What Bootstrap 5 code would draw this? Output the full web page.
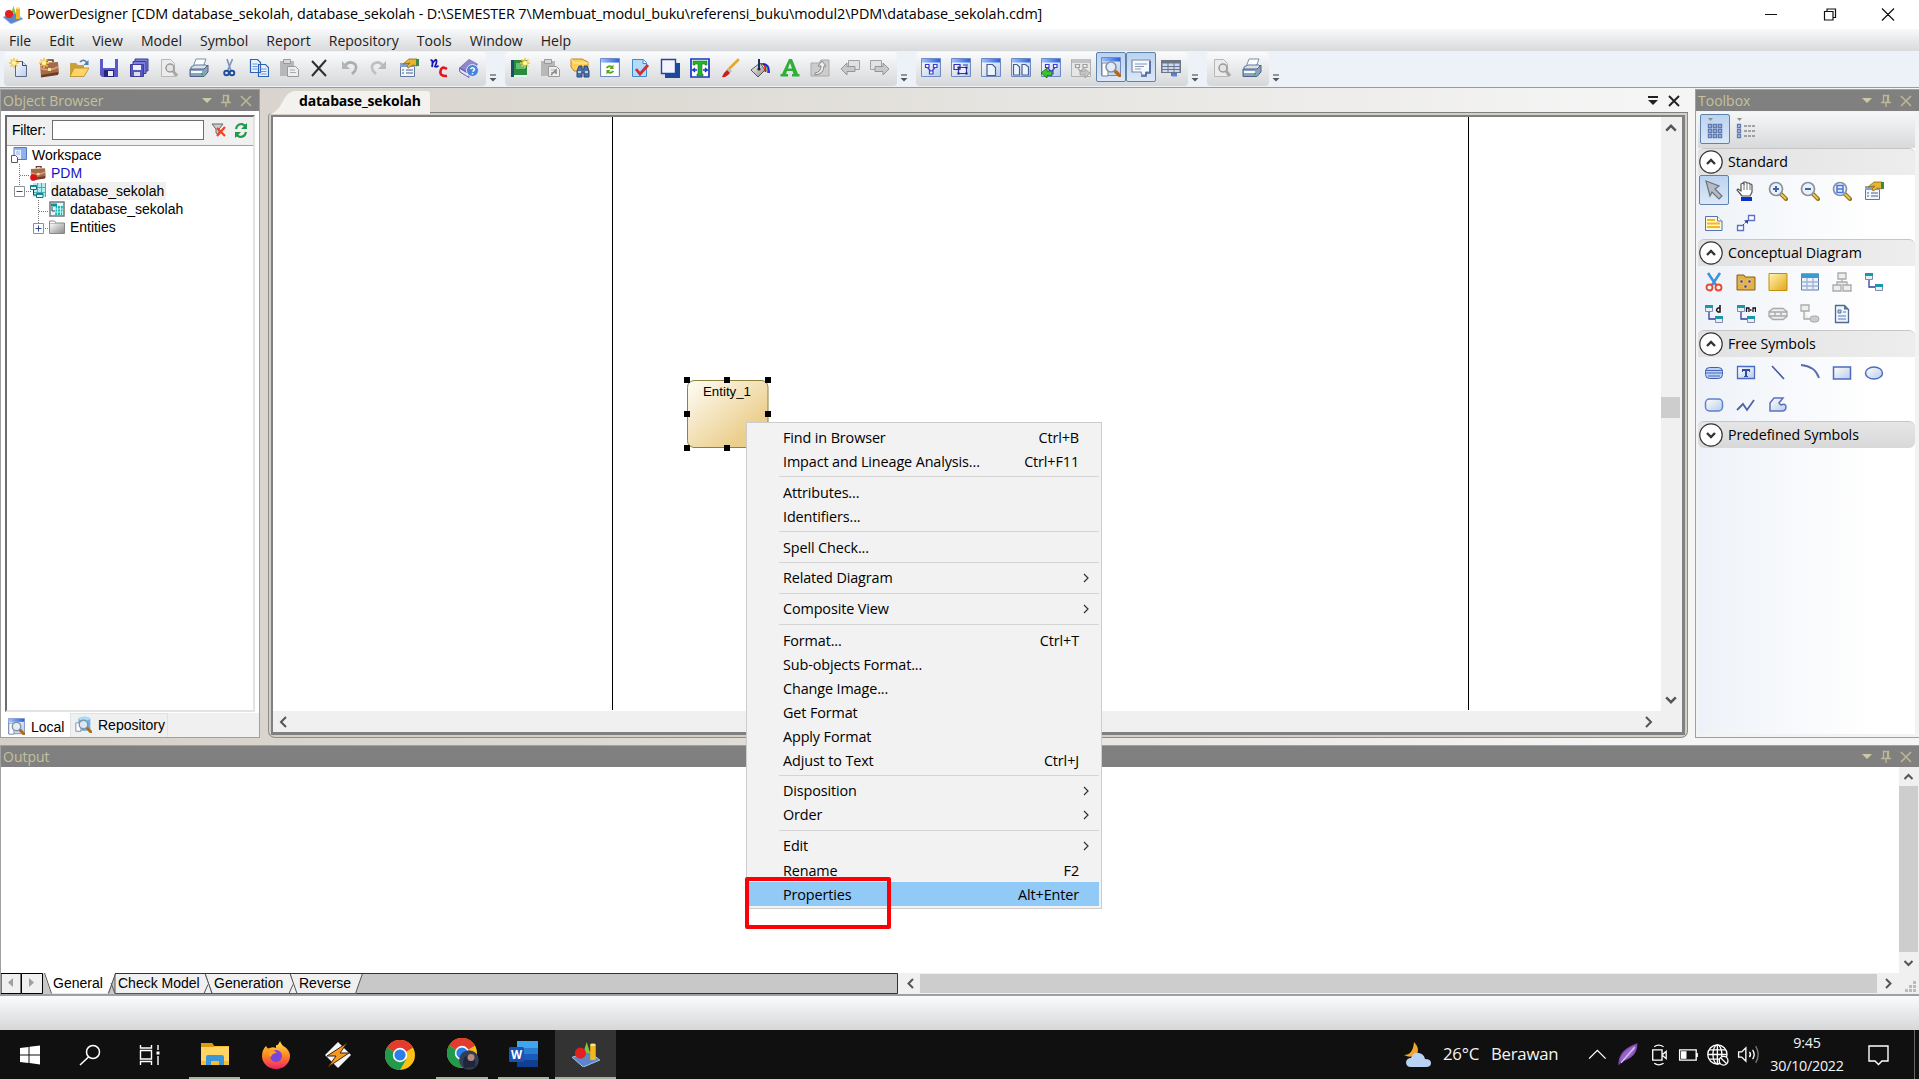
<!DOCTYPE html>
<html lang="en">
<head>
<meta charset="utf-8">
<title>PowerDesigner</title>
<link href="https://cdn.jsdelivr.net/npm/bootstrap@5.3.0/dist/css/bootstrap.min.css" rel="stylesheet">
<style>
body{height:1079px;width:1919px;overflow:hidden;background:#fff;color:#000;font:14px/1 "Open Sans","Noto Sans",sans-serif}
svg{display:block;flex:none}
.arial{font-family:"Liberation Sans",Arial,sans-serif;font-size:14px}
.titlebar{height:29px;padding:0 23px 0 3px;font-size:14.4px}
.titlebar .caption{letter-spacing:-.1px;margin-left:4px}
.menubar{height:22px;background:linear-gradient(#f8f9fa,#d9dadb);padding-left:9px;gap:18px;color:#222;font-size:14.05px}
.menubar span{position:static;line-height:24px;white-space:nowrap}
.toolstrip{height:37px;background:#edf2f9;border-bottom:1px solid #999ba0;padding:1px 0 0 4px}
.tgroup{height:34px;border-radius:4px;background:linear-gradient(#fafbfc,#d6d7d8);padding-right:2px}
.tcell{width:30px;height:32px}
.sel{background:linear-gradient(#bcd3ee,#dbe8f8);border:1px solid #5d82ab;border-radius:2px}
.tcell.sel{height:30px;margin-top:0}
.more{width:19px;height:34px;padding:22px 0 0 3px}
.workarea{height:657px;padding-top:1px;background:linear-gradient(90deg,#d6d0c8,#dedbd5 35%,#f5f5f5 85%)}
.dock{border:1px solid #a0a0a0;border-top:0}
.docktitle{height:22px;background:#808080;border-top:1px solid #a0a0a0;color:#c5c19c;font-size:14px;padding:0 7px 0 2px}
.docktitle span{padding-top:1px}
.docktitle svg{margin-left:7px}
.browser{width:260px;height:649px;background:#fff}
.sunken{margin:4px 4px 0 4px;height:597px;border:2px solid #e3e3e3;border-top-color:#6d6d6d;border-left-color:#6d6d6d}
.filterbar{height:29px;background:#f0f0f0;border-bottom:1px solid #a0a0a0;padding:0 0 2px 5px}
.filterbar span{letter-spacing:-.2px}
.fbox{width:152px;height:20px;border:1px solid #6e6e6e;background:#fff;margin:0 5px 0 6px}
.tree{height:90px;position:relative}
.trow{height:18px;line-height:18px;letter-spacing:-.03px}
.trow svg{margin-right:5px}
.btabs{height:24px;background:#f0f0f0;margin-top:1px}
.btab{height:24px}
.docarea{width:1420px;height:649px;margin-left:8px}
.doctabs{height:24px}
.doctab{width:162px;height:23px}
.doctab span{left:31px;top:5px;font-weight:700;font-size:14px;letter-spacing:-.18px}
.tabfill{border-bottom:1px solid #808080;padding-right:6px}
.frame1{height:625px;border:1px solid #8c8c88;border-top:0;border-radius:4px 0 7px 7px;background:#d5d0c7;padding:2px}
.frame2{height:620px;border:solid #808080;border-width:2px 3px 3px 2px;background:#fff}
.canvas{width:1388px;height:594px;background:#fff}
.page{left:339px;top:0;width:857px;height:593px;border:solid #000;border-width:0 1px}
.entity{left:414px;top:263px;width:82px;height:68px}
.vbar{width:21px;background:#f0f0f0;height:594px}
.thumb{background:#cdcdcd}
.hbar{height:21px;background:#f0f0f0;padding:0 28px 0 5px}
.toolbox{width:224px;height:649px;margin-left:7px;background:#f3f3f3;border-right:0}
.tboxin{margin:1px 4px 0 2px;height:622px;background:linear-gradient(90deg,#eef2f8,#fff 80%)}
.tbtools{height:36px;background:linear-gradient(#f6f7f9,#d8d9db);padding:2px 0 0 2px}
.tbtools .tcell{height:30px;width:30px;margin-right:1px}
.sechead{height:27px;border-top:1px solid #c6c6c6;border-radius:6px 6px 0 0;background:linear-gradient(90deg,#e2e2e2,#ededed);font-size:14.2px;padding-left:1px;letter-spacing:-.06px}
.sechead svg{margin-right:5px}
.secbody{height:64px;padding-left:1px}
.secbody>div{width:32px;height:32px;padding-right:2px}
.secbody .sel{width:30px;height:30px;margin-right:2px;padding:0}
.output{height:251px;background:#fff;border-left:1px solid #a0a0a0}
.outbody{height:206px}
.obar{width:20px;background:#f0f0f0;padding-right:1px}
.outfoot{height:21px}
.status{height:34px;background:linear-gradient(#fafbfd,#d5d7d9)}
.taskbar{height:49px;background:#101010;color:#f4f4f4;position:relative;z-index:0}
.tk{width:62px;height:49px}
.tk.run{border-bottom:2px solid #a3b5a2;padding-top:1px}
.clock{width:86px;margin-left:-1px;font-size:14.3px;line-height:22.5px;letter-spacing:-.25px}
.ctx{left:746px;top:422px;width:356px;height:487px;background:#f2f2f2;border:1px solid #ccc;padding:2px;font-size:14.4px}
.ctx .mi{height:24px;line-height:26px;padding:0 10px 0 34px;letter-spacing:-.12px}
.ctx .mi.sc{padding-right:20px}
.ctx .hot{background:#91c9f7}
.ctx .msep{height:7px;padding:3px 0;margin-left:30px}
.ctx .msep:before{content:"";display:block;height:1px;background:#d4d4d4}
.callout{left:745px;top:877px;width:146px;height:52px;border:4px solid #fb0007;border-radius:2px}
</style>
<script src="https://cdn.jsdelivr.net/npm/bootstrap@5.3.0/dist/js/bootstrap.bundle.min.js"></script>
</head>
<body class="d-flex flex-column">
<svg width="0" height="0" class="position-absolute">
<defs>
<linearGradient id="gb" x1="0" y1="0" x2="1" y2="1"><stop offset="0" stop-color="#fff"/><stop offset="1" stop-color="#b9cbe8"/></linearGradient>
<linearGradient id="gy" x1="0" y1="0" x2="1" y2="1"><stop offset="0" stop-color="#fff3b0"/><stop offset="1" stop-color="#e2a718"/></linearGradient>
<linearGradient id="gw" x1="0" y1="0" x2="1" y2="0"><stop offset="0" stop-color="#9fc0ff"/><stop offset="1" stop-color="#2a63dd"/></linearGradient>
<linearGradient id="ge" x1="0" y1="0" x2="1" y2="1"><stop offset="0" stop-color="#fffdf8"/><stop offset=".75" stop-color="#ebcf8e"/><stop offset="1" stop-color="#e9ca84"/></linearGradient>
<linearGradient id="gg" x1="0" y1="0" x2="1" y2="1"><stop offset="0" stop-color="#fff"/><stop offset="1" stop-color="#888"/></linearGradient>
<linearGradient id="gf" x1="0" y1="0" x2="0" y2="1"><stop offset="0" stop-color="#ffe14a"/><stop offset=".5" stop-color="#ff8a1f"/><stop offset="1" stop-color="#f0206a"/></linearGradient>
<g id="star"><path d="M5 0v10M0 5h10M1.500 1.500l7 7M8.500 1.500l-7 7" stroke="#f2c443" stroke-width="1.500"/><circle cx="5" cy="5" r="2" fill="#fff6b0"/></g>
<g id="winf"><path d="M.5 .5h19v18h-19z" fill="url(#gb)" stroke="#6d8ac4"/><path d="M1 1h18v3.500H1z" fill="url(#gw)"/></g>
<g id="glass"><path d="M12 12l5 5" stroke="#b06a1c" stroke-width="3.500" stroke-linecap="round"/><circle cx="8" cy="8" r="5" fill="#e4eefa" fill-opacity=".9" stroke="#8492a6" stroke-width="1.600"/></g>
<g id="zglass"><path d="M13 13l5 5" stroke="#8c701c" stroke-width="4" stroke-linecap="round"/><path d="M13 13l4.500 4.500" stroke="#e8c650" stroke-width="2" stroke-linecap="round"/><circle cx="8" cy="8" r="6.500" fill="#e9f1fc" stroke="#8c929a" stroke-width="1.700"/></g>
<g id="cdm"><path d="M5 7v8h7" fill="none" stroke="#3a3aa8" stroke-width="1.300"/><path d="M1.500 1.500h7v6h-7zM11.500 12.500h7v6h-7z" fill="#dff2f5" stroke="#88a"/><path d="M1 1h8v3H1zM11 12h8v3h-8z" fill="#1d97a8"/></g>
<g id="bag"><path d="M8 4V2h6v2" fill="none" stroke="#6f3b22" stroke-width="1.500"/><path d="M1 5l18-1 1 12-18 3z" fill="#a56a48"/><path d="M1 10q9 4 18-1" fill="none" stroke="#d9a27c" stroke-width="1.500"/><path d="M2 17l17-3v3l-17 2.500z" fill="#6d3c25"/><path d="M9 10h3v3H9z" fill="#f3e2a0"/></g>
<symbol id="new" viewBox="0 0 20 20"><path d="M6.500 3.500h7l4 4v11h-11z" fill="url(#gb)" stroke="#5b6a8a"/><path d="M13.500 3.500v4h4" fill="#dfe8f5" stroke="#39456a"/><use href="#star"/></symbol>
<symbol id="newcase" viewBox="0 0 20 20"><use href="#bag"/><use href="#star"/></symbol>
<symbol id="open" viewBox="0 0 20 20"><path d="M1 5h6l2 2h6v11H1z" fill="#caa03c"/><path d="M5 10h15l-5 8.500H1z" fill="#ffd365" stroke="#b58a2a" stroke-width=".8"/><path d="M11 4q4-4 7 1" fill="none" stroke="#507fae" stroke-width="1.600"/><path d="M19.500 2v5h-5z" fill="#507fae"/></symbol>
<symbol id="save" viewBox="0 0 20 20"><path d="M1 1h18v18H3l-2-2z" fill="#5858c8"/><path d="M4 1h12v9H4z" fill="#f2f6ff"/><path d="M5 12h10v7H5z" fill="#25257c"/><path d="M9 13h5v5H9z" fill="#eee"/></symbol>
<symbol id="saveall" viewBox="0 0 20 20"><path d="M6 1h13v12H6z" fill="#7d7ddb" stroke="#3c3c98"/><path d="M4 3.500h13v12H4z" fill="#7d7ddb" stroke="#3c3c98"/><path d="M1.500 6.500h13v12h-13z" fill="#5555c0" stroke="#3c3c98"/><path d="M4 7h8v5H4z" fill="#eef"/><path d="M5 14h6v4H5z" fill="#ddd"/></symbol>
<symbol id="prevg" viewBox="0 0 20 20"><path d="M2.500 1.500h9l4 4v13h-13z" fill="#ececec" stroke="#b7b7b7"/><circle cx="11" cy="10" r="4" fill="#e4e4e4" stroke="#9a9a9a" stroke-width="1.500"/><path d="M14 13l4 5" stroke="#a8a8a8" stroke-width="3"/></symbol>
<symbol id="print" viewBox="0 0 20 20"><path d="M7 1h10l-3 8H4z" fill="#fff" stroke="#7b8db0"/><path d="M2 9l4-2h11l2 2-4 3H2z" fill="#dae2ec" stroke="#60769a"/><path d="M1 11h14l4-4v7l-4 4.500H1z" fill="#8aa1c0" stroke="#4c6288"/><path d="M2 13h11v2H2z" fill="#f7fbff"/><path d="M12 16h2" stroke="#3b3" stroke-width="2"/></symbol>
<symbol id="cut" viewBox="0 0 20 20"><path d="M8 1l4 12M13.500 1L8.500 13" stroke="#7d97bb" stroke-width="1.700"/><circle cx="7.500" cy="15" r="2.300" fill="none" stroke="#1e4f9c" stroke-width="1.900"/><circle cx="13" cy="15" r="2.300" fill="none" stroke="#1e4f9c" stroke-width="1.900"/></symbol>
<symbol id="copy" viewBox="0 0 20 20"><path d="M1.500 1.500h7l3 3v10h-10zM9.500 6.500h7l3 3v9h-10z" fill="#eaf2ff" stroke="#2d62b4" stroke-width="1.200"/><path d="M3.500 6h5M3.500 8.500h5M3.500 11h5M11.500 11h6M11.500 13.500h6M11.500 16h6" stroke="#6b96d6"/></symbol>
<symbol id="pasteg" viewBox="0 0 20 20"><path d="M1 3h14v15H1z" fill="#b8b8b8"/><path d="M4.500 1.500h7v4h-7z" fill="#d8d8d8" stroke="#999"/><path d="M8.500 8.500h8l3 3v7h-11z" fill="#eee" stroke="#999"/><path d="M11 12h5M11 14.500h6" stroke="#aaa"/></symbol>
<symbol id="del" viewBox="0 0 20 20"><path d="M3 3l14 15M17 2L3 18" stroke="#2e2e2e" stroke-width="2"/></symbol>
<symbol id="undo" viewBox="0 0 20 20"><path d="M6 8q3-5 8-3t2 8l-3 3" fill="none" stroke="#adadad" stroke-width="2.600"/><path d="M3 3v8h8z" fill="#b5b5b5"/></symbol>
<symbol id="redo" viewBox="0 0 20 20"><path d="M14 8q-3-5-8-3t-2 8l3 3" fill="none" stroke="#c0c0c0" stroke-width="2.600"/><path d="M17 3v8H9z" fill="#bababa"/></symbol>
<symbol id="props" viewBox="0 0 20 20"><path d="M1.500 6.500h14v12h-14z" fill="#f2f7ff" stroke="#60789c"/><path d="M1 5h15v4H1z" fill="#86a0cc"/><path d="M3 12h2M7 12h7M3 15h2M7 15h7" stroke="#7f93b6" stroke-width="1.400"/><path d="M4 6l6-5h8v7l-4-1-5 3-1-2 3-3z" fill="#e7b530" stroke="#8b6812" stroke-width=".8"/><path d="M17 1h3v7h-3z" fill="#3b8a49"/></symbol>
<symbol id="nc" viewBox="0 0 20 20"><path d="M1.500 2.500q3-1.500 1.500 6.500M3 6q4-6 4.500-3.500T6 8.500q2 1 3.500-1" fill="none" stroke="#1616b8" stroke-width="1.800"/><path d="M18 11q-5.500-3.500-6.500 2t6.500 5" fill="none" stroke="#e8131e" stroke-width="2.600"/></symbol>
<symbol id="help" viewBox="0 0 20 20"><path d="M0 10L10 1l9 5-8 11z" fill="#7a6cc0"/><path d="M0 10l10 6v3.500L1 14z" fill="#e8e6f4" stroke="#6a5cb2"/><path d="M2 9.500l8-8 8 4-8 9z" fill="#9287cc"/><circle cx="13.500" cy="12.500" r="6" fill="#4a84da" stroke="#dfeaff"/><path d="M11.500 11q2-2.500 4 0 0 1.500-2 2.500M13.500 15v1.200" fill="none" stroke="#fff" stroke-width="1.500"/></symbol>
<symbol id="book" viewBox="0 0 20 20"><path d="M1 2h16v17H1z" fill="#2c8a3d"/><path d="M1 2h3v17H1z" fill="#174f6c"/><path d="M6 5h9v6H6z" fill="#67bd70"/><path d="M4 17h13v2H4z" fill="#dfe"/><use href="#star" x="10"/></symbol>
<symbol id="linkg" viewBox="0 0 20 20"><use href="#pasteg" width="20" height="20"/><path d="M11 17l5-5v4" stroke="#888" fill="none" stroke-width="1.500"/></symbol>
<symbol id="find" viewBox="0 0 20 20"><path d="M1 1h11l6 3v9H4L1 9z" fill="#ffcf58" stroke="#c08a20"/><path d="M1 1l3 4h14" fill="none" stroke="#fff0a8"/><path d="M7 19v-6l2-5h3v3h2V8h3l2 5v6h-5v-4h-2v4z" fill="#4d6ea8" stroke="#2c467c"/><path d="M8 14h3M15 14h3" stroke="#cfe" stroke-width="1.500"/></symbol>
<symbol id="refwin" viewBox="0 0 20 20"><use href="#winf"/><path d="M1.500 5h17v13h-17z" fill="#fff"/><path d="M6.500 10q2.500-3 5.500-1M13.500 13q-2.500 3-5.500 1" fill="none" stroke="#59a51c" stroke-width="1.800"/><path d="M13.500 6.500v4.500H9.500zM6.500 16.500V12h4z" fill="#59a51c"/></symbol>
<symbol id="check" viewBox="0 0 20 20"><path d="M2.500 1.500h11l3 3v14h-14z" fill="#b4dbfa" stroke="#3c8cd0"/><path d="M13 1.500v4h4" fill="#e7f5ff" stroke="#3c8cd0"/><path d="M6 11l4 5 8-9" fill="none" stroke="#cf2f33" stroke-width="2.800"/></symbol>
<symbol id="shadow" viewBox="0 0 20 20"><path d="M5 5h15v15H5z" fill="#1c4a96"/><path d="M1.500 1.500h14v14h-14z" fill="#f1f4ff" stroke="#2b3fae" stroke-width="1.400"/></symbol>
<symbol id="tbox" viewBox="0 0 20 20"><path d="M1 1h18v18H1z" fill="#fff" stroke="#1c35c4" stroke-width="1.700"/><path d="M3 3h14v4h-2v-1h-3v10h1v2H7v-2h1V6H5v1H3z" fill="#25b52c" stroke="#117518" stroke-width=".6"/><path d="M2 12h5M13 12h5M5 10l-2 2 2 2M15 10l2 2-2 2" stroke="#1c35c4" fill="none" stroke-width="1.400"/></symbol>
<symbol id="brush" viewBox="0 0 20 20"><path d="M18 2L8 12" stroke="#e8a82a" stroke-width="2.800" stroke-linecap="round"/><path d="M9 10l3 3-2 2-3-3z" fill="#bbb"/><path d="M7 12l3 3q-4 5-8 4 2-5 5-7z" fill="#c81e1e"/></symbol>
<symbol id="bucket" viewBox="0 0 20 20"><path d="M1 12L10 5l5 7-7 7z" fill="url(#gg)" stroke="#555"/><path d="M9 1v10" stroke="#1c2b70" stroke-width="2"/><circle cx="9" cy="11" r="1.600" fill="#222"/><path d="M11 6q5-1 4.500 8" fill="none" stroke="#e11" stroke-width="1.800"/><path d="M12 6q6-1 5.500 9" fill="none" stroke="#2a2" stroke-width="1.300"/><path d="M13 6q6.500 0 6 9" fill="none" stroke="#22d" stroke-width="1.800"/></symbol>
<symbol id="fonta" viewBox="0 0 20 20"><path d="M9 1h3l6 15h1.500v2.500H12V16h1.500l-1-3H7l-1 3h2v2.500H.5V16H2zM10 5l-2 5.500h4z" fill="#2fae39" fill-rule="evenodd"/></symbol>
<symbol id="upg" viewBox="0 0 20 20"><path d="M1 5h8l2-3h8v16H1z" fill="#cdcdcd" stroke="#aaa"/><path d="M5 15q6-1 6-7H8l4-5 4 5h-2q0 8-9 9z" fill="#eee" stroke="#888"/></symbol>
<symbol id="backg" viewBox="0 0 20 20"><path d="M8.500 2.500h11v9h-11z" fill="#e2e2e2" stroke="#a2a2a2"/><path d="M1 11l6-6v3.500h8v5H7V17z" fill="#c9c9c9" stroke="#959595"/></symbol>
<symbol id="fwdg" viewBox="0 0 20 20"><path d="M.5 2.500h11v9H.5z" fill="#e2e2e2" stroke="#a2a2a2"/><path d="M19 11l-6-6v3.500H5v5h8V17z" fill="#c9c9c9" stroke="#959595"/></symbol>
<symbol id="w1" viewBox="0 0 20 20"><use href="#winf"/><path d="M4.500 6.500H8v3H4.500zM12.500 6.500H16v3h-3.500zM8.500 13H12v3H8.500zM6.500 9.500l3 3.500M14 9.500L11 13" fill="#fff" stroke="#3d3dcc" stroke-width="1.200"/></symbol>
<symbol id="w2" viewBox="0 0 20 20"><use href="#winf"/><path d="M3 6.500h6v5H3zM7.500 9.500h8v6h-8zM12 7h5" fill="#eef" stroke="#3030ba" stroke-width="1.200"/><path d="M6.500 8.500h2v2h-2zM6.500 14.500h2v2h-2zM14.500 8.500h2v2h-2zM14.500 14.500h2v2h-2z" fill="#224"/></symbol>
<symbol id="w3" viewBox="0 0 20 20"><use href="#winf"/><path d="M6 6.500h5.500l3 3v8H6z" fill="#eef4ff" stroke="#4a5f8c" stroke-width="1.200"/></symbol>
<symbol id="w4" viewBox="0 0 20 20"><use href="#winf"/><path d="M2.500 6.500H6l2.500 2.500v8h-6zM11 6.500h3.500L17.500 9v8H11z" fill="#eef4ff" stroke="#4a5f8c" stroke-width="1.200"/></symbol>
<symbol id="w5" viewBox="0 0 20 20"><use href="#w1" width="20" height="20"/><path d="M0 15l6-5v3h5v4.500H6V20z" fill="#3fc033" stroke="#0d6a10" stroke-width=".8"/></symbol>
<symbol id="w6" viewBox="0 0 20 20"><path d="M.5 1.500h19v17H.5z" fill="#e6e6e6" stroke="#b0b0b0"/><path d="M1 1h18v4H1z" fill="#c2c2c2"/><path d="M4.500 6.500h4v3h-4zM12 6.500h4v3h-4zM6.500 9.500l3 4 4-4" fill="#eee" stroke="#a0a0a0" stroke-width="1.200"/><path d="M19 15l-5-4v2H9v4h5v3z" fill="#c4c4c4" stroke="#999" stroke-width=".8"/></symbol>
<symbol id="w7" viewBox="0 0 20 20"><use href="#winf"/><path d="M1 6h6v13H1z" fill="#fff" stroke="#6f83a4"/><use href="#glass" x="2" y="2"/></symbol>
<symbol id="w8" viewBox="0 0 20 20"><path d="M1 3h18v12h-4v3h-4l-1-3H1z" fill="#f4f8ff" stroke="#7a8aa8" stroke-width="1.200"/><path d="M4 7h12M4 9.500h9M4 12h6" stroke="#8798b4"/><path d="M19 4v12h-4v3h-5" fill="none" stroke="#4a6597" stroke-width="1.600"/></symbol>
<symbol id="w9" viewBox="0 0 20 20"><path d="M0 2h20v13h-4v3h-6v-3H0z" fill="#6d7582"/><path d="M1.500 5.500h5v2.500h-5zM7.500 5.500h5v2.500h-5zM13.500 5.500h5v2.500h-5zM1.500 9h5v2h-5zM7.500 9h5v2h-5zM13.500 9h5v2h-5zM1.500 12h5v2h-5zM7.500 12h5v2h-5zM13.500 12h5v2h-5z" fill="#c9d9f6"/><path d="M11 16h5v2.500h-5z" fill="#5b86d8"/></symbol>
<symbol id="ws" viewBox="0 0 16 16"><path d="M3 .5h12.500v12H3z" fill="#e9f1fd" stroke="#5877ba"/><path d="M3 1h12v2H3zM10 3h5v9h-5z" fill="#8db2ef"/><path d="M5 5h4M5 7h4" stroke="#8db2ef"/><path d="M.5 8.500h4l2 2v5h-6z" fill="#fff" stroke="#556"/></symbol>
<symbol id="pdm" viewBox="0 0 16 16"><use href="#bag" transform="scale(.79)"/><circle cx="3.500" cy="12.500" r="3.300" fill="#e00f14"/></symbol>
<symbol id="mdl" viewBox="0 0 16 16"><path d="M3 0h13v14H3z" fill="#b2ecee"/><path d="M3 4.500h13M3 9.500h13M7.500 0v14M11.500 0v14M15.500 0v14" stroke="#49aeb6"/><path d="M3.500 7v5h3" fill="none" stroke="#334"/><path d="M.5 2.500h6v4h-6zM6.500 10.500h6.500v4h-6.500z" fill="#e4fbfb" stroke="#1a6f7c"/><path d="M.5 2.500h6v1.500h-6zM6.500 10.500h6.500v1.500h-6.500z" fill="#1a8f9c"/></symbol>
<symbol id="dgm" viewBox="0 0 16 16"><path d="M1 1h14v14H1z" fill="#e3f6f6" stroke="#777" stroke-width="1.500"/><path d="M7 5h7l-1 9H6z" fill="#17b8b5"/><path d="M6 8h8M6 11h8M8.500 5v9M11.500 5v9" stroke="#d8ffff" stroke-width=".8"/><path d="M2 2.500h6v3H2z" fill="#118f97"/><path d="M3 6v4h3" fill="none" stroke="#347"/></symbol>
<symbol id="fold" viewBox="0 0 16 14"><path d="M.5 3h15v10.500H.5z" fill="url(#gg)" stroke="#888"/><path d="M.5 3V1h5l1.500 2" fill="#fff" stroke="#888"/></symbol>
<symbol id="rep" viewBox="0 0 20 20"><path d="M4 3v13q7 3 14 0V3q-7-4-14 0z" fill="#68b3e8"/><ellipse cx="11" cy="3" rx="7" ry="2.300" fill="#a8dcf8"/><path d="M1 8h6v10H1z" fill="#fff" stroke="#6f83a4"/><use href="#glass" x="2" y="2"/></symbol>
<symbol id="grid9" viewBox="0 0 20 24"><path d="M3 1h5L5.500 4z" fill="#8f8f8f"/><g fill="#c5d5f0" stroke="#607bb3" stroke-width="1.500"><path d="M3.500 7.500h3v3h-3zM8.500 7.500h3v3h-3zM13.500 7.500h3v3h-3zM3.500 12.500h3v3h-3zM8.500 12.500h3v3h-3zM13.500 12.500h3v3h-3zM3.500 17.500h3v3h-3zM8.500 17.500h3v3h-3zM13.500 17.500h3v3h-3z"/></g></symbol>
<symbol id="list3" viewBox="0 0 20 24"><path d="M1 1h5L3.500 4z" fill="#8f8f8f"/><path d="M1.500 7.500h3v3h-3zM1.500 12.500h3v3h-3zM1.500 17.500h3v3h-3z" fill="#c5d5f0" stroke="#607bb3" stroke-width="1.300"/><path d="M8 9h12M8 14h12M8 19h12" stroke="#8a8a8a" stroke-width="1.300" stroke-dasharray="3 1"/></symbol>
<symbol id="arrow" viewBox="0 0 20 20"><path d="M2 1l13 5-4 3 7 7-3 3-7-7-2 4z" fill="#b7bcc4" stroke="#6a737f" stroke-width="1.200"/></symbol>
<symbol id="hand" viewBox="0 0 20 20"><path d="M6 15L1 9l1-1 3 2V3l2-1 1 1V1h2l1 1h2l1 1h1l1 1v7l-2 4z" fill="#fff" stroke="#555" stroke-width="1.200"/><path d="M8 3v6M11 2v7M14 3v6" stroke="#777"/><path d="M5 16h11v4H5z" fill="#0c32c4"/></symbol>
<symbol id="zin" viewBox="0 0 20 20"><use href="#zglass"/><path d="M8 5v6M5 8h6" stroke="#3f65a8" stroke-width="2"/></symbol>
<symbol id="zout" viewBox="0 0 20 20"><use href="#zglass"/><path d="M5 8h6" stroke="#3f65a8" stroke-width="2"/></symbol>
<symbol id="zfit" viewBox="0 0 20 20"><use href="#zglass"/><path d="M5 4.500h6v7H5zM5 8h6" stroke="#4674e8" fill="none" stroke-width="1.500"/></symbol>
<symbol id="note" viewBox="0 0 20 20"><path d="M1.500 3.500h12l4.500 4.500v9.500H1.500z" fill="#fff7d0" stroke="#5572b8"/><path d="M3 7h8M3 10.500h13M3 14h13" stroke="#f0b828" stroke-width="2"/><path d="M13.500 3.500V8H18" fill="#fff" stroke="#5572b8"/></symbol>
<symbol id="link" viewBox="0 0 20 20"><path d="M1.500 12.500h6v5h-6zM12.500 2.500h6v5h-6z" fill="#fff" stroke="#5a70c4" stroke-width="1.300"/><path d="M7 12l4-4" stroke="#2c3c90" stroke-dasharray="2 1"/><path d="M12 7v4L8 7.500z" fill="#2c3c90"/></symbol>
<symbol id="scis" viewBox="0 0 20 20"><path d="M4 1l8 12M16 1L8 13" stroke="#3b93dc" stroke-width="2.600"/><circle cx="5.500" cy="15.500" r="3" fill="none" stroke="#e84830" stroke-width="1.800"/><circle cx="14.500" cy="15.500" r="3" fill="none" stroke="#e84830" stroke-width="1.800"/></symbol>
<symbol id="pack" viewBox="0 0 20 20"><path d="M1 3h7l1 2h10v13H1z" fill="#e3b04a" stroke="#8a5f12"/><path d="M4 8h3v3H4zM12 8h3v3h-3zM8 13h3v3H8z" fill="#35408c" stroke="#f5d385" stroke-width=".7"/></symbol>
<symbol id="ent" viewBox="0 0 20 20"><path d="M1 1.500h18v17H1z" fill="url(#gy)" stroke="#c28f0c"/></symbol>
<symbol id="tbl" viewBox="0 0 20 20"><path d="M1.500 2h17v16h-17z" fill="#eaf1ff" stroke="#60789f"/><path d="M1 1.500h18v4.500H1z" fill="#3a9acd"/><path d="M1.500 10h17M1.500 14h17M7 6v12M13 6v12" stroke="#9fb2d4" stroke-width="1.300"/></symbol>
<symbol id="inh" viewBox="0 0 20 20"><path d="M6 1h8v6H6zM1 13h8v6H1zM11 13h8v6h-8zM10 7v3M5 13v-3h10v3" fill="#eee" stroke="#aaa" stroke-width="1.300"/></symbol>
<symbol id="rel" viewBox="0 0 20 20"><use href="#cdm"/></symbol>
<symbol id="reld" viewBox="0 0 20 20"><use href="#cdm"/><path d="M16 1v7h-2q-3-2 0-4h2" fill="none" stroke="#111" stroke-width="1.500"/></symbol>
<symbol id="relnn" viewBox="0 0 20 20"><use href="#cdm"/><path d="M10.500 8V4H13v4M17 8V4h2.500v4M14 6h1.500" fill="none" stroke="#111" stroke-width="1.300"/></symbol>
<symbol id="assoc" viewBox="0 0 20 20"><path d="M5 4.500h10l4 3v5l-4 3H5l-4-3v-5zM1 8h18M1 12h18M7 8v4M13 8v4" fill="#eee" stroke="#a9a9a9" stroke-width="1.300"/></symbol>
<symbol id="alink" viewBox="0 0 20 20"><path d="M1 1h8v6H1zM4 7v8h6" fill="#eee" stroke="#aaa" stroke-width="1.300"/><rect x="10" y="12" width="9" height="6" rx="3" fill="#ccc" stroke="#aaa"/></symbol>
<symbol id="file" viewBox="0 0 20 20"><path d="M3.500 1.500h9l4 4v13h-13z" fill="#eef5ff" stroke="#51698e" stroke-width="1.300"/><path d="M12 1.500v4h4.500" fill="#50729f"/><path d="M6 6h3v3H6zM11 8h3M6 12h8M6 15h8" stroke="#5578aa" fill="#bcd"/></symbol>
<symbol id="f1" viewBox="0 0 20 20"><rect x="1.500" y="4.500" width="17" height="11" rx="4" fill="#bfd0fa" stroke="#3f5fae"/><path d="M1 7.500h18M1 10h18M4 13h12" stroke="#4767b8" stroke-width="1.100"/></symbol>
<symbol id="f2" viewBox="0 0 20 20"><path d="M1.500 3.500h17v12h-17z" fill="url(#gb)" stroke="#4a6cc0" stroke-width="1.300"/><path d="M6 6h8v3h-1V8h-2v5h1v1H8v-1h1V8H7v1H6z" fill="#2f4ea4"/></symbol>
<symbol id="f3" viewBox="0 0 20 20"><path d="M4 3l12 13" stroke="#4459a0" stroke-width="1.600"/></symbol>
<symbol id="f4" viewBox="0 0 20 20"><path d="M1 2q14 1 18 13" fill="none" stroke="#5a6db0" stroke-width="1.800"/></symbol>
<symbol id="f5" viewBox="0 0 20 20"><path d="M1.500 4h17v12h-17z" fill="url(#gb)" stroke="#4a6cc0" stroke-width="1.500"/></symbol>
<symbol id="f6" viewBox="0 0 20 20"><ellipse cx="10" cy="10" rx="8.500" ry="6" fill="url(#gb)" stroke="#4a6cc0" stroke-width="1.500"/></symbol>
<symbol id="f7" viewBox="0 0 20 20"><rect x="1.500" y="4" width="17" height="12" rx="4" fill="url(#gb)" stroke="#5f80d0" stroke-width="1.500"/></symbol>
<symbol id="f8" viewBox="0 0 20 20"><path d="M1 15l6-6 4 6 7-10" fill="none" stroke="#5163a6" stroke-width="1.800"/></symbol>
<symbol id="f9" viewBox="0 0 20 20"><path d="M2 16V8l4-5h9l-4 5 2 2q5-2 5 2t-4 4z" fill="url(#gb)" stroke="#5773bd" stroke-width="1.500"/></symbol>
<symbol id="tri" viewBox="0 0 12 12"><path d="M1 3h10L6 8z" fill="#cdc9a5"/></symbol>
<symbol id="pin" viewBox="0 0 12 14"><path d="M3.500 1.500h5v7h-5zM7.500 2v6M1 8.500h10M6 9v4" fill="none" stroke="#bcb894" stroke-width="1.300"/></symbol>
<symbol id="xx" viewBox="0 0 12 12"><path d="M1 1l10 10M11 1L1 11" stroke="#bcb894" stroke-width="1.600"/></symbol>
<symbol id="mk" viewBox="0 0 8 8"><path d="M1 1h6" stroke="#555" stroke-width="1.200"/><path d="M.5 4h7L4 7.500z" fill="#555"/></symbol>
<symbol id="up" viewBox="0 0 10 8"><path d="M1 6l4-4 4 4" fill="none" stroke="#555" stroke-width="2"/></symbol>
<symbol id="logo" viewBox="0 0 20 18"><path d="M0 11l12-4 8 6-12 5z" fill="#5c87c9" stroke="#a8c4ec" stroke-width=".7"/><path d="M8 8l2.500-8L13 8z" fill="#7fc544"/><path d="M13 2h4v11h-4z" fill="#f0b71e"/><ellipse cx="15" cy="2" rx="2" ry="1" fill="#ffe48a"/><circle cx="6" cy="8" r="4" fill="#e2211f"/></symbol>
<symbol id="chrome" viewBox="0 0 30 30"><circle cx="15" cy="15" r="15" fill="#fbc116"/><path d="M15 15L2 7.500A15 15 0 0 1 28 7.500z" fill="#e33b2e"/><path d="M2 7.500A15 15 0 0 0 15 30l6.500-11.300L15 15z" fill="#229a4b"/><path d="M15 7.500h13L15 15z" fill="#e33b2e"/><circle cx="15" cy="15" r="7.200" fill="#fff"/><circle cx="15" cy="15" r="5.600" fill="#2b7de9"/></symbol>
<symbol id="cir-up" viewBox="0 0 24 24"><circle cx="12" cy="12" r="11.200" fill="#fff" stroke="#333" stroke-width="1.200"/><path d="M8 14l4-4 4 4" fill="none" stroke="#333" stroke-width="2.400"/></symbol>
</defs>
</svg>

<header class="titlebar d-flex align-items-center">
 <svg width="20" height="18"><use href="#logo"/></svg>
 <span class="caption text-nowrap">PowerDesigner [CDM database_sekolah, database_sekolah - D:\SEMESTER 7\Membuat_modul_buku\referensi_buku\modul2\PDM\database_sekolah.cdm]</span>
 <svg class="ms-auto" width="132" height="20" fill="none" stroke="#111" stroke-width="1.200"><path d="M1 9.500h12M60.500 6.500h8.500v8.500h-8.500zM63 6.500V4h8.500v8.500H69M118 3.500l12 12M130 3.500l-12 12"/></svg>
</header>
<nav class="menubar d-flex"><span>File</span><span>Edit</span><span>View</span><span>Model</span><span>Symbol</span><span>Report</span><span>Repository</span><span>Tools</span><span>Window</span><span>Help</span></nav>

<div class="toolstrip d-flex" id="strip">
 <div class="tgroup d-flex" data-icons="new newcase open save saveall prevg print cut copy pasteg del undo redo props nc help"></div><div class="more"><svg width="8" height="8"><use href="#mk"/></svg></div>
 <div class="tgroup d-flex" data-icons="book linkg find refwin check shadow tbox brush bucket fonta upg backg fwdg"></div><div class="more"><svg width="8" height="8"><use href="#mk"/></svg></div>
 <div class="tgroup d-flex" data-icons="w1 w2 w3 w4 w5 w6 w7* w8* w9"></div><div class="more"><svg width="8" height="8"><use href="#mk"/></svg></div>
 <div class="tgroup d-flex" data-icons="prevg print"></div><div class="more"><svg width="8" height="8"><use href="#mk"/></svg></div>
</div>

<main class="workarea d-flex">
 <section class="dock browser">
  <div class="docktitle d-flex align-items-center"><span class="me-auto">Object Browser</span><svg width="12" height="12"><use href="#tri"/></svg><svg width="12" height="14"><use href="#pin"/></svg><svg width="12" height="12" class="ms-2"><use href="#xx"/></svg></div>
  <div class="sunken">
   <div class="filterbar arial d-flex align-items-center"><span>Filter:</span><div class="fbox"></div>
    <svg width="44" height="18"><path d="M3 3h11l-4 5v6l-3-2V8z" fill="#ccc" stroke="#666"/><path d="M8 7l8 8M16 6l-8 9" stroke="#ee4326" stroke-width="2.200"/><path d="M27 8q1-5 6-5l4 2M37 11q-1 5-6 5l-4-2" fill="none" stroke="#21994c" stroke-width="2.200"/><path d="M38 2v6h-6zM26 17v-6h6z" fill="#21994c"/></svg>
   </div>
   <div class="tree arial">
    <svg class="position-absolute" width="60" height="90" style="left:0;top:0"><path d="M12.500 18v28M13 29.500h10M19 45.500h5M31.500 54v27M32 65.500h10M38 82.500h5" stroke="#777" stroke-dasharray="1 1"/><g fill="#fff" stroke="#8a9098"><path d="M7.500 40.500h10v10h-10zM26.500 77.500h10v10h-10z"/></g><path d="M9.500 45.500h6M28.500 82.500h6M31.500 79.500v6" stroke="#2b4a9c"/></svg>
    <div class="trow d-flex align-items-center" style="padding-left:4px"><svg width="16" height="16"><use href="#ws"/></svg><span>Workspace</span></div>
    <div class="trow d-flex align-items-center" style="padding-left:23px"><svg width="16" height="16"><use href="#pdm"/></svg><span style="color:#1414c8">PDM</span></div>
    <div class="trow d-flex align-items-center" style="padding-left:23px"><svg width="16" height="16"><use href="#mdl"/></svg><span style="background:#f0f0f0;padding-right:2px">database_sekolah</span></div>
    <div class="trow d-flex align-items-center" style="padding-left:42px"><svg width="16" height="16"><use href="#dgm"/></svg><span>database_sekolah</span></div>
    <div class="trow d-flex align-items-center" style="padding-left:42px"><svg width="16" height="14"><use href="#fold"/></svg><span>Entities</span></div>
   </div>
  </div>
  <div class="btabs arial d-flex">
   <div class="btab d-flex align-items-center bg-white border-end" style="width:70px;padding:3px 0 0 7px"><svg width="17" height="17" class="me-1"><use href="#w7"/></svg><span style="padding-left:2px">Local</span></div>
   <div class="btab d-flex align-items-center border-top border-end" style="width:97px;padding:0 0 2px 4px"><svg width="17" height="17"><use href="#rep"/></svg><span style="padding-left:6px">Repository</span></div>
  </div>
 </section>

 <section class="docarea">
  <div class="doctabs d-flex">
   <div class="doctab position-relative"><svg width="162" height="25"><path d="M3 25Q10 22 15 12T27 2H159Q162 2 162 5V25z" fill="#f3f2ef"/></svg><span class="position-absolute">database_sekolah</span></div>
   <div class="tabfill flex-grow-1 d-flex justify-content-end align-items-center"><svg width="36" height="14"><path d="M2 3h10" stroke="#222" stroke-width="2"/><path d="M2 6h10l-5 5z" fill="#222"/><path d="M23 2l10 10M33 2L23 12" stroke="#222" stroke-width="1.900"/></svg></div>
  </div>
  <div class="frame1"><div class="frame2">
   <div class="d-flex">
    <div class="canvas position-relative">
     <div class="page position-absolute"></div>
     <svg class="entity position-absolute overflow-visible" width="82" height="68"><path d="M7 .5h68q6 1 6 7v53q0 6-6 7H7q-6.500-1-6.500-7V7.500q0-6 6.500-7z" fill="url(#ge)" stroke="#8b843c" stroke-linejoin="round"/><text x="40" y="16" text-anchor="middle" font-family="Liberation Sans" font-size="13.300">Entity_1</text><g fill="#000"><path d="M-3-3h6v6h-6zM37-3h6v6h-6zM78-3h6v6h-6zM-3 31h6v6h-6zM78 31h6v6h-6zM-3 65h6v6h-6zM37 65h6v6h-6z"/></g></svg>
    </div>
    <div class="vbar d-flex flex-column"><svg class="ms-1 mt-1" width="12" height="12" viewBox="0 -2 10 10"><use href="#up" width="10" height="8"/></svg><div class="thumb" style="height:21px;width:19px;margin-top:264px"></div><svg class="mt-auto mb-1 ms-1" width="12" height="12" viewBox="0 0 10 10"><path d="M1 2l4 4 4-4" fill="none" stroke="#555" stroke-width="2"/></svg></div>
   </div>
   <div class="hbar d-flex align-items-center justify-content-between"><svg width="10" height="12"><path d="M8 1L3 6l5 5" fill="none" stroke="#555" stroke-width="2"/></svg><svg width="10" height="12"><path d="M2 1l5 5-5 5" fill="none" stroke="#555" stroke-width="2"/></svg></div>
  </div></div>
 </section>

 <section class="dock toolbox">
  <div class="docktitle d-flex align-items-center"><span class="me-auto">Toolbox</span><svg width="12" height="12"><use href="#tri"/></svg><svg width="12" height="14"><use href="#pin"/></svg><svg width="12" height="12" class="ms-2"><use href="#xx"/></svg></div>
  <div class="tboxin">
   <div class="tbtools d-flex"><div class="tcell sel d-flex align-items-center justify-content-center"><svg width="20" height="24"><use href="#grid9"/></svg></div><div class="tcell d-flex align-items-center justify-content-center"><svg width="20" height="24"><use href="#list3"/></svg></div></div>
   <div class="sechead d-flex align-items-center"><svg width="24" height="24"><use href="#cir-up"/></svg>Standard</div>
   <div class="secbody d-flex flex-wrap" data-tools="arrow* hand zin zout zfit props note link"></div>
   <div class="sechead d-flex align-items-center"><svg width="24" height="24"><use href="#cir-up"/></svg>Conceptual Diagram</div>
   <div class="secbody d-flex flex-wrap" data-tools="scis pack ent tbl inh rel reld relnn assoc alink file"></div>
   <div class="sechead d-flex align-items-center"><svg width="24" height="24"><use href="#cir-up"/></svg>Free Symbols</div>
   <div class="secbody d-flex flex-wrap" data-tools="f1 f2 f3 f4 f5 f6 f7 f8 f9"></div>
   <div class="sechead d-flex align-items-center rounded-2" style="background:linear-gradient(#e6e6e6,#d8d8d8)"><svg width="24" height="24" viewBox="0 0 24 24"><use href="#cir-up" width="24" height="24" transform="rotate(180 12 12)"/></svg>Predefined Symbols</div>
  </div>
 </section>
</main>

<section class="output">
 <div class="docktitle d-flex align-items-center"><span class="me-auto">Output</span><svg width="12" height="12"><use href="#tri"/></svg><svg width="12" height="14"><use href="#pin"/></svg><svg width="12" height="12" class="ms-2"><use href="#xx"/></svg></div>
 <div class="outbody d-flex justify-content-end"><div class="obar d-flex flex-column"><svg width="19" height="19" viewBox="-4.500 -6 19 19"><use href="#up" width="10" height="8"/></svg><div class="thumb flex-grow-1"></div><svg width="19" height="21" viewBox="-4.500 -6 19 19"><path d="M1 2l4 4 4-4" fill="none" stroke="#555" stroke-width="2"/></svg></div></div>
 <div class="outfoot d-flex">
  <svg width="897" height="21" class="arial"><path d="M0 0h897v21H0z" fill="#c8c8c8"/>
   <path d="M0 .5h20v20H0zM20.500 .5h21v20h-21z" fill="#f0f0f0" stroke="#000"/><path d="M12 5v9l-5-4.500zM28 5v9l5-4.500z" fill="#a0a0a0"/>
   <g fill="#f0f0f0" stroke="#555"><path d="M289 .5h72.500l-7 20H295z"/><path d="M204 .5h85l7 20H211z"/><path d="M114 .5h90l7 20H114z"/></g>
   <path d="M42.500 0h71.500l-7 20.500H50z" fill="#fff"/><path d="M106.500 20L110 12l3.500 8z" fill="#c8c8c8"/><path d="M43.500 0l7 20.500M107.500 20.500l7-20M110 10l4 10.500M203 20.500l4-9M288 20.500l4-9" stroke="#555" fill="none"/><path d="M114 .5h782.500v20H355" fill="none" stroke="#333"/>
   <g font-size="14" font-family="Liberation Sans"><text x="52" y="15">General</text><text x="117" y="15">Check Model</text><text x="213" y="15">Generation</text><text x="298" y="15">Reverse</text></g></svg>
  <div class="d-flex align-items-center flex-grow-1" style="background:#f0f0f0"><svg width="22" height="19"><path d="M15 5l-4.500 4.500L15 14" fill="none" stroke="#555" stroke-width="2"/></svg><div class="thumb" style="height:19px;width:957px"></div><svg width="41" height="19"><path d="M9 5l4.500 4.500L9 14" fill="none" stroke="#555" stroke-width="2"/><path d="M36 7h3v3h-3zM36 11h3v3h-3zM32 11h3v3h-3zM36 15h3v3h-3zM32 15h3v3h-3zM28 15h3v3h-3z" fill="#bbb"/></svg></div>
 </div>
 <div style="height:2px;background:#a0a0a0"></div>
</section>
<div class="status"></div>

<footer class="taskbar d-flex">
 <div class="tk d-flex align-items-center justify-content-center" style="width:60px"><svg width="20" height="20"><path d="M0 3l8.500-1v7.500H0zM9.500 1.800L20 .5v9H9.500zM0 10.500h8.500V18L0 17zM9.500 10.500H20v9L9.500 18z" fill="#fff"/></svg></div>
 <div class="tk d-flex align-items-center justify-content-center" style="width:60px"><svg width="22" height="22" fill="none" stroke="#fff" stroke-width="1.500"><circle cx="14" cy="8" r="6.500"/><path d="M9.500 13L1 21"/></svg></div>
 <div class="tk d-flex align-items-center justify-content-center" style="width:60px"><svg width="22" height="20" fill="none" stroke="#fff" stroke-width="1.400"><path d="M1.500 0v3h11V0M1.500 20v-3.500h11V20M1.500 5.500h11v8.500h-11zM19 0v5M19 11v9"/><path d="M17.500 6.500h3v3h-3z" fill="#fff" stroke="none"/></svg></div>
 <div class="tk run d-flex align-items-center justify-content-center" style="width:51px;margin:0 5px 0 9px"><svg width="28" height="24"><path d="M0 1h11l2 3h15v19H0z" fill="#f6bd34"/><path d="M0 1h11l2 3v2H0z" fill="#dc9a10"/><path d="M0 5h28v14H0z" fill="#ffd565"/><path d="M5 23V15q0-2 2-2h14q2 0 2 2v8h-5v-4h-8v4z" fill="#3a97dc"/></svg></div>
 <div class="tk d-flex align-items-center justify-content-center"><svg width="28" height="28"><path d="M14 4q2 1 4-4 2 5 5 6 5 4 5 9A14 13 0 0 1 0 15Q0 9 4 5l2 3q4-3 8-1z" fill="url(#gf)"/><circle cx="14" cy="15" r="6" fill="#7b45dc"/><path d="M2 7q8 0 13 5-5 0-6 4-4-2-7-9z" fill="#ff9d26"/></svg></div>
 <div class="tk d-flex align-items-center justify-content-center"><svg width="26" height="26"><path d="M13 0l13 13-13 13L0 13z" fill="#f4f4f4"/><path d="M22 1L2 14l9 0-8 11 21-14h-9z" fill="#f7991e" stroke="#3b2308"/></svg></div>
 <div class="tk d-flex align-items-center justify-content-center"><svg width="30" height="30"><use href="#chrome"/></svg></div>
 <div class="tk run d-flex align-items-center justify-content-center" style="width:52px;margin:0 5px;padding-left:2px"><svg width="32" height="32"><use href="#chrome" width="30" height="30"/><circle cx="22" cy="22" r="9.800" fill="#343d55"/><path d="M17 30q-3-12 5-13 8 2 6 12z" fill="#1e263b"/><circle cx="24" cy="19.500" r="3.500" fill="#b98b80"/></svg></div>
 <div class="tk run d-flex align-items-center justify-content-center" style="width:51px;margin:0 6px 0 5px"><svg width="30" height="28"><path d="M8 1h21v7H8z" fill="#41a5ee"/><path d="M8 8h21v7H8z" fill="#2b7cd3"/><path d="M8 14h21v7H8z" fill="#185abd"/><path d="M8 20h21v7H8z" fill="#103f91"/><rect x="0" y="7" width="15" height="15" rx="1.500" fill="#1853b3"/><text x="7.500" y="18.500" font-family="Open Sans" font-size="11.500" font-weight="700" text-anchor="middle" fill="#fff">W</text></svg></div>
 <div class="tk run d-flex align-items-center justify-content-center" style="width:61px;background:#333"><svg width="28" height="25"><use href="#logo"/></svg></div>
 <div class="d-flex align-items-center ms-auto" style="width:516px;font-size:16.800px;letter-spacing:-.25px">
  <svg width="30" height="28"><path d="M11 1q6 6 3 12-6 5-13 1 9 0 10-13z" fill="#f0a52c"/><path d="M8 26q-5 0-5-5 1-4 5-4 2-6 8-5 5 1 6 6 6 0 6 4t-5 4z" fill="#b9d3f5"/></svg>
  <span class="text-nowrap" style="margin-left:10px;width:48px">26°C</span><span style="width:93px">Berawan</span>
  <svg width="178" height="25" viewBox="0 0 172 24" fill="none" stroke="#fff" stroke-width="1.300" style="margin-left:3px"><path d="M2 16l8-8 8 8"/><path d="M31 21Q31 8 48 2 48 14 34 18z" fill="#9865c8" stroke="#7f49b2"/><path d="M33 20L46 5" stroke="#dcc3f0"/><path d="M63.500 7.500h9v10h-9zM73 12l3.500-3v7L73 13M65 4.500q4-3 9 0M65 20.500q4 3 9 0"/><path d="M89.500 7.500h16v10h-16zM106.500 10.500v4"/><path d="M91.500 9.500h4v6h-4z" fill="#fff"/><circle cx="126" cy="12" r="9.300"/><ellipse cx="126" cy="12" rx="4.300" ry="9.300"/><path d="M117 12h18M118 7.500h16M118 16.500h10M126 3v18"/><circle cx="132" cy="18" r="4.200" fill="#101010"/><path d="M129 15l6 6"/><path d="M146.500 9.500h3l4-4v13l-4-4h-3zM157 9.500q2 2.500 0 5M160 7.500q3 4.500 0 9"/><path d="M163 4q5 8 0 16" stroke="#777"/></svg>
  <div class="clock text-center">9:45<br>30/10/2022</div>
  <svg width="22" height="22" style="margin-left:18px" fill="none" stroke="#fff" stroke-width="1.400"><path d="M1 2h19v15h-6l-3.500 3.500L7 17H1z"/></svg>
  <div class="ms-auto" style="width:1px;height:49px;background:#666;margin-right:4px"></div>
 </div>
</footer>

<div class="ctx position-absolute" id="ctx">
 <div class="mi sc d-flex justify-content-between"><span>Find in Browser</span><span>Ctrl+B</span></div>
 <div class="mi sc d-flex justify-content-between"><span>Impact and Lineage Analysis...</span><span>Ctrl+F11</span></div>
 <div class="msep"></div>
 <div class="mi">Attributes...</div><div class="mi">Identifiers...</div>
 <div class="msep"></div>
 <div class="mi">Spell Check...</div>
 <div class="msep"></div>
 <div class="mi sub d-flex justify-content-between align-items-center">Related Diagram</div>
 <div class="msep"></div>
 <div class="mi sub d-flex justify-content-between align-items-center">Composite View</div>
 <div class="msep"></div>
 <div class="mi sc d-flex justify-content-between"><span>Format...</span><span>Ctrl+T</span></div>
 <div class="mi">Sub-objects Format...</div><div class="mi">Change Image...</div><div class="mi">Get Format</div><div class="mi">Apply Format</div>
 <div class="mi sc d-flex justify-content-between"><span>Adjust to Text</span><span>Ctrl+J</span></div>
 <div class="msep"></div>
 <div class="mi sub d-flex justify-content-between align-items-center">Disposition</div><div class="mi sub d-flex justify-content-between align-items-center">Order</div>
 <div class="msep"></div>
 <div class="mi sub d-flex justify-content-between align-items-center">Edit</div>
 <div class="mi sc d-flex justify-content-between"><span>Rename</span><span>F2</span></div>
 <div class="mi sc hot d-flex justify-content-between"><span>Properties</span><span>Alt+Enter</span></div>
</div>
<div class="callout position-absolute"></div>
<script>
// Fill toolbars from their icon lists; a trailing * marks a pressed button.
document.querySelectorAll('[data-icons],[data-tools]').forEach(function(g){
  (g.dataset.icons||g.dataset.tools).split(' ').forEach(function(n){
    var on=n.endsWith('*'); n=n.replace('*','');
    g.insertAdjacentHTML('beforeend','<div class="'+(g.dataset.icons?'tcell ':'')+(on?'sel ':'')+'d-flex align-items-center justify-content-center"><svg width="20" height="20"><use href="#'+n+'"/></svg></div>');
  });
});
document.querySelectorAll('.sub').forEach(function(m){
  m.insertAdjacentHTML('beforeend','<svg width="6" height="10"><path d="M1 1l4 4-4 4" fill="none" stroke="#333" stroke-width="1.200"/></svg>');
});
</script>
</body>
</html>
